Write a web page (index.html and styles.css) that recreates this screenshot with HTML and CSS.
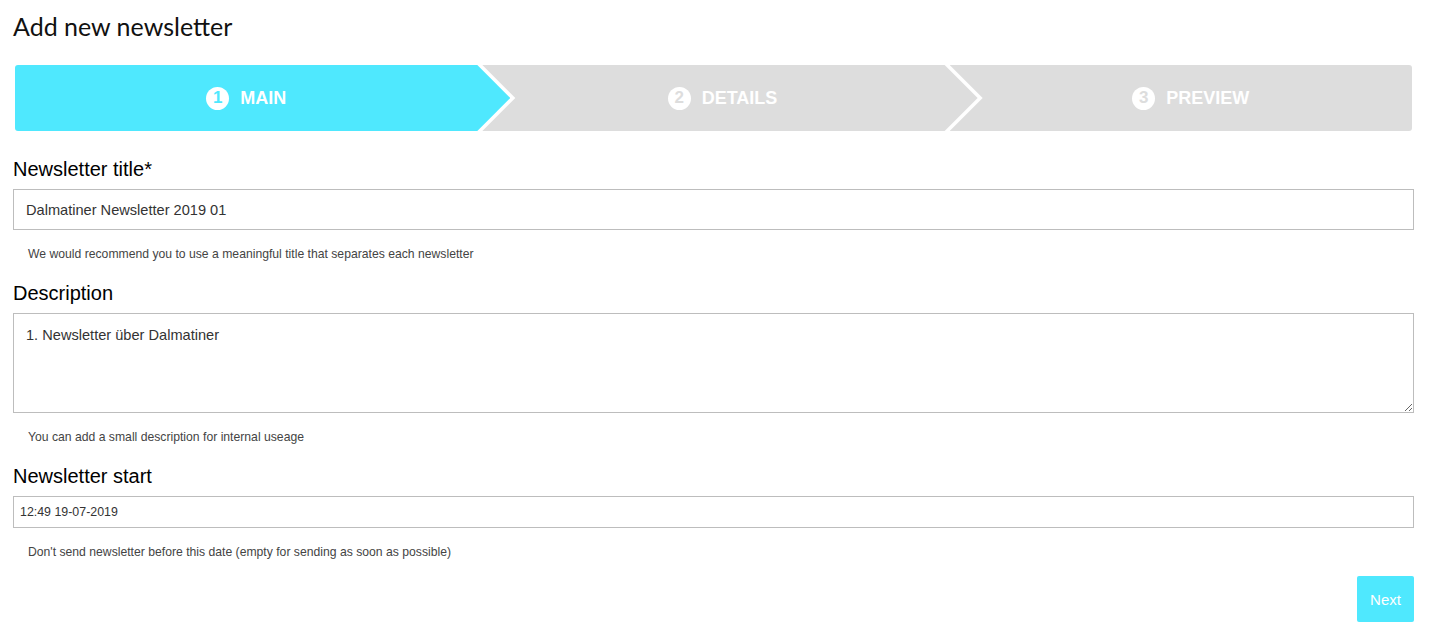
FILE: index.html
```html
<!DOCTYPE html>
<html lang="en">
<head>
<meta charset="utf-8">
<title>Add new newsletter</title>
<link rel="stylesheet" href="styles.css">
</head>
<body>
<div class="page">
  <h1 class="page-title">Add new newsletter</h1>
  <div class="wizard">
    <div class="step step-first step-active">
      <span class="step-num">1</span><span class="step-label">MAIN</span>
    </div>
    <div class="step step-mid">
      <span class="step-num">2</span><span class="step-label">DETAILS</span>
    </div>
    <div class="step step-last">
      <span class="step-num">3</span><span class="step-label">PREVIEW</span>
    </div>
  </div>
  <form class="form">
    <label class="field-label label-first" for="title">Newsletter title*</label>
    <input class="text-input" id="title" type="text" value="Dalmatiner Newsletter 2019 01">
    <p class="help">We would recommend you to use a meaningful title that separates each newsletter</p>

    <label class="field-label" for="desc">Description</label>
    <textarea class="text-area" id="desc">1. Newsletter über Dalmatiner</textarea>
    <p class="help">You can add a small description for internal useage</p>

    <label class="field-label" for="start">Newsletter start</label>
    <input class="date-input" id="start" type="text" value="12:49 19-07-2019">
    <p class="help">Don't send newsletter before this date (empty for sending as soon as possible)</p>

    <div class="actions">
      <button class="btn-next" type="button">Next</button>
    </div>
  </form>
</div>
</body>
</html>
```

FILE: styles.css
```css
* { box-sizing: border-box; }
html, body { margin: 0; padding: 0; background: #fff; }
body { font-family: "Liberation Sans", Arial, sans-serif; color: #000; }

.page { padding: 0 18px 0 13px; }

.page-title {
  margin: 0;
  padding-top: 10px;
  font-family: Lato, "Noto Sans", sans-serif;
  font-weight: 400;
  font-size: 25px;
  line-height: 32px;
  color: #111;
}

.wizard {
  display: flex;
  height: 66px;
  margin: 23px 2px 0 2px;
}
.step {
  display: flex;
  align-items: center;
  justify-content: center;
  height: 66px;
  background: #dddddd;
  color: #fff;
  font-weight: 700;
  font-size: 18px;
}
.step-active { background: #4fe8fe; }
.step-first {
  flex: 0 0 auto;
  width: calc((100% - 10px) / 3 + 33px);
  padding-right: 33px;
  border-radius: 3px 0 0 3px;
  clip-path: polygon(0 0, calc(100% - 33px) 0, 100% 50%, calc(100% - 33px) 100%, 0 100%);
}
.step-mid {
  flex: 0 0 auto;
  width: calc((100% - 10px) / 3 + 33px);
  margin-left: -28px;
  padding: 0 33px 0 18px;
  clip-path: polygon(0 0, calc(100% - 33px) 0, 100% 50%, calc(100% - 33px) 100%, 0 100%, 33px 50%);
}
.step-last {
  flex: 1 1 auto;
  margin-left: -28px;
  padding-left: 20px;
  border-radius: 0 3px 3px 0;
  clip-path: polygon(0 0, 100% 0, 100% 100%, 0 100%, 33px 50%);
}
.step-num {
  display: inline-flex;
  align-items: center;
  justify-content: center;
  width: 23px;
  height: 23px;
  border-radius: 50%;
  background: #fff;
  color: #dddddd;
  font-size: 17px;
  font-weight: 700;
  margin-right: 11px;
}
.step-active .step-num { color: #4fe8fe; }
.step-label { line-height: 23px; }

.form { display: flex; flex-direction: column; }

.field-label {
  display: block;
  font-size: 20px;
  line-height: 24px;
  margin-top: 19px;
  color: #000;
}
.label-first { margin-top: 26px; }

.text-input, .text-area, .date-input {
  display: block;
  width: 100%;
  margin-top: 8px;
  border: 1px solid #bdbdbd;
  border-radius: 0;
  background: #fff;
  font-family: "Liberation Sans", Arial, sans-serif;
  color: #333;
  outline: none;
}
.text-input {
  height: 41px;
  padding: 0 12px;
  font-size: 14.6px;
}
.text-area {
  height: 100px;
  padding: 11px 12px;
  font-size: 14.6px;
  line-height: 20px;
  resize: vertical;
}
.date-input {
  height: 32px;
  padding: 0 6px;
  font-size: 12.4px;
  background: #fff;
}

.help {
  margin: 16px 0 0 15px;
  font-size: 12.2px;
  line-height: 16px;
  color: #444;
}

.actions {
  display: flex;
  justify-content: flex-end;
  margin-top: 16px;
}
.btn-next {
  width: 57px;
  height: 46px;
  border: 0;
  border-radius: 2px;
  background: #4fe8fe;
  color: #fff;
  font-family: "Liberation Sans", Arial, sans-serif;
  font-size: 15px;
  padding: 0;
}
```
